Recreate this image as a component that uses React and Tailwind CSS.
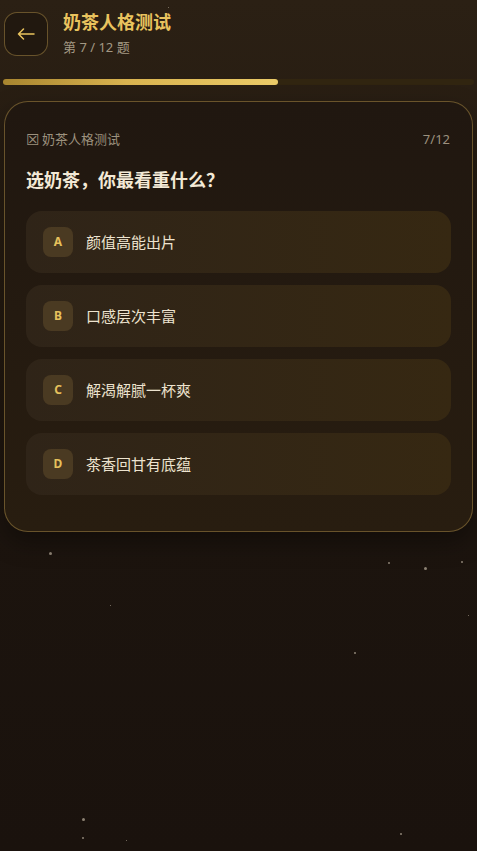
import { useState } from "react";

const options = [
  { key: "A", label: "颜值高能出片" },
  { key: "B", label: "口感层次丰富" },
  { key: "C", label: "解渴解腻一杯爽" },
  { key: "D", label: "茶香回甘有底蕴" },
];

const stars = [
  { x: 168, y: 7, s: 1 },
  { x: 49, y: 552, s: 2.5 },
  { x: 388, y: 562, s: 1.5 },
  { x: 424, y: 567, s: 2.5 },
  { x: 461, y: 561, s: 2 },
  { x: 110, y: 605, s: 1 },
  { x: 468, y: 615, s: 1 },
  { x: 354, y: 652, s: 2 },
  { x: 82, y: 818, s: 2.5 },
  { x: 82, y: 837, s: 1.5 },
  { x: 126, y: 840, s: 1 },
  { x: 400, y: 833, s: 1.5 },
];

const current = 7;
const total = 12;

export default function App() {
  const [picked, setPicked] = useState(null);

  return (
    <div
      className="relative min-h-[851px] w-full overflow-hidden bg-[linear-gradient(180deg,#2b2014_0%,#241a10_35%,#1c140e_62%,#1a120d_100%)] text-[#efe4cf]"
      style={{ fontFamily: '"Noto Sans", "Noto Sans CJK SC", sans-serif' }}
    >
      {stars.map((st, i) => (
        <span
          key={i}
          className="pointer-events-none absolute rounded-full bg-[#bdb2a0]/70"
          style={{ left: st.x, top: st.y, width: st.s, height: st.s }}
        />
      ))}

      <div className="relative flex items-center gap-[15px] px-[4px] pt-[11px]">
        <button
          type="button"
          className="flex h-[44px] w-[44px] items-center justify-center rounded-[13px] border border-[#7a6332]/80 bg-[#21180f] text-[#e9c35e]"
        >
          <svg width="18" height="12" viewBox="0 0 18 12" fill="none" stroke="currentColor" strokeWidth="1.5" strokeLinecap="round" strokeLinejoin="round">
            <path d="M17 6H1.5M6.5 1 1.5 6l5 5" />
          </svg>
        </button>
        <div>
          <h1 className="text-[18px] font-bold leading-[22px] text-[#e9c35e]">奶茶人格测试</h1>
          <p className="mt-[6px] text-[13px] leading-[17px] text-[#a39883]">
            第 {current} / {total} 题
          </p>
        </div>
      </div>

      <div className="relative mx-[3px] mt-[23px] h-[6px] rounded-full bg-[#35280f]/70">
        <div
          className="h-full rounded-full bg-[linear-gradient(90deg,#a8852f,#d9b350_45%,#ebcb68)]"
          style={{ width: `${(current / total) * 100}%` }}
        />
      </div>

      <div className="relative mx-[4px] mt-[16px] rounded-[24px] border border-[#7a6332]/80 bg-[linear-gradient(180deg,#201710,#281d10)] px-[21px] pb-[36px] pt-[28px] shadow-[0_10px_24px_rgba(0,0,0,0.35)]">
        <div className="flex h-[18px] items-center justify-between text-[13px] leading-[18px] text-[#9c917e]">
          <span className="flex items-center gap-[3px]">
            <span className="text-[15px] leading-[18px]">☒</span>
            <span>奶茶人格测试</span>
          </span>
          <span className="pr-[1px]">
            {current}/{total}
          </span>
        </div>

        <h2 className="mt-[20px] text-[18px] font-bold leading-[24px] text-[#f3e9d6]">选奶茶，你最看重什么？</h2>

        <div className="mt-[19px] flex flex-col gap-[12px]">
          {options.map((opt) => (
            <button
              key={opt.key}
              type="button"
              onClick={() => setPicked(opt.key)}
              className={`flex h-[62px] items-center gap-[13px] rounded-[16px] px-[17px] text-left transition ${
                picked === opt.key ? "bg-[#45331a]" : "bg-[linear-gradient(90deg,#2f2418,#362812)]"
              }`}
            >
              <span className="flex h-[30px] w-[30px] items-center justify-center rounded-[8px] bg-[#4a3a22] text-[12px] font-bold text-[#e6c15c]">
                {opt.key}
              </span>
              <span className="text-[15px] leading-[20px] text-[#ede3cf]">{opt.label}</span>
            </button>
          ))}
        </div>
      </div>
    </div>
  );
}
